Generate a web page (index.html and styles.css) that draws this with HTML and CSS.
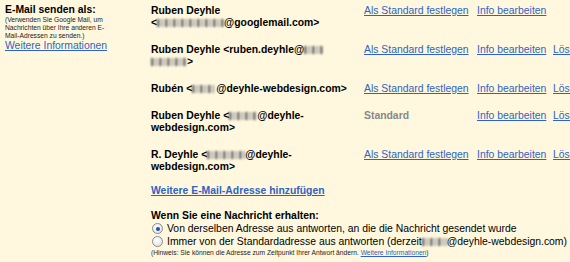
FILE: index.html
```html
<!DOCTYPE html>
<html lang="de">
<head>
  <meta charset="UTF-8" />
  <title>Einstellungen | Konten</title>
  <link rel="stylesheet" href="styles.css">
</head>
<body>
  <div class="side">
    <div class="side-title">E-Mail senden als:</div>
    <div class="small">(Verwenden Sie Google Mail, um<br>Nachrichten über Ihre anderen E-<br>Mail-Adressen zu senden.)</div>
    <a href="#">Weitere Informationen</a>
  </div>

  <div class="main">
    <div class="row">
      <div class="name">Ruben Deyhle<br>&lt;<span class="blur" style="width:67px"></span>@googlemail.com&gt;</div>
      <a href="#">Als Standard festlegen</a>
      <a href="#">Info bearbeiten</a>
      <span></span>
    </div>
    <div class="row">
      <div class="name">Ruben Deyhle &lt;ruben.deyhle@<span class="blur" style="width:19px"></span><br><span class="blur" style="width:36px"></span>&gt;</div>
      <a href="#">Als Standard festlegen</a>
      <a href="#">Info bearbeiten</a>
      <a href="#">Löschen</a>
    </div>
    <div class="row">
      <div class="name">Rubén &lt;<span class="blur" style="width:24px"></span>@deyhle-webdesign.com&gt;</div>
      <a href="#">Als Standard festlegen</a>
      <a href="#">Info bearbeiten</a>
      <a href="#">Löschen</a>
    </div>
    <div class="row">
      <div class="name">Ruben Deyhle &lt;<span class="blur" style="width:28px"></span>@deyhle-<br>webdesign.com&gt;</div>
      <span class="default">Standard</span>
      <a href="#">Info bearbeiten</a>
      <a href="#">Löschen</a>
    </div>
    <div class="row">
      <div class="name">R. Deyhle &lt;<span class="blur" style="width:38px"></span>@deyhle-<br>webdesign.com&gt;</div>
      <a href="#">Als Standard festlegen</a>
      <a href="#">Info bearbeiten</a>
      <a href="#">Löschen</a>
    </div>

    <a class="add" href="#">Weitere E-Mail-Adresse hinzufügen</a>

    <div class="reply-title">Wenn Sie eine Nachricht erhalten:</div>
    <div class="option"><span class="radio checked"></span>Von derselben Adresse aus antworten, an die die Nachricht gesendet wurde</div>
    <div class="option"><span class="radio"></span>Immer von der Standardadresse aus antworten (derzeit <span class="blur" style="width:25px"></span>@deyhle-webdesign.com)</div>
    <div class="small">(Hinweis: Sie können die Adresse zum Zeitpunkt Ihrer Antwort ändern. <a href="#">Weitere Informationen</a>)</div>
  </div>
</body>
</html>
```

FILE: styles.css
```css
html, body {
  overflow: hidden;
}

body {
  margin: 0;
  width: 570px;
  height: 262px;
  display: flex;
  background: #fff8df;
  color: #000;
  font-family: "Liberation Sans", Arial, sans-serif;
  font-size: 10.4px;
  line-height: 12px;
}

a {
  color: #2f62c4;
  text-decoration: underline;
}

.side {
  flex: 0 0 146px;
  padding: 4px 0 0 5px;
}

.side-title {
  font-weight: bold;
}

.small {
  font-size: 6.7px;
  line-height: 8px;
  color: #222;
}

.main {
  flex: 0 0 auto;
  white-space: nowrap;
}

.row {
  display: grid;
  grid-template-columns: 213px 113px 76px 60px;
  padding: 5px 0 10px;
}

.name {
  font-weight: bold;
}

.default {
  font-weight: bold;
  color: #888;
}

/* unkenntlich gemachte Teile der Adressen */
.blur {
  display: inline-block;
  height: 8px;
  vertical-align: -1px;
  background: repeating-linear-gradient(90deg, #333 0 2px, #999 2px 3px, #ddd 3px 5px, #555 5px 6px, transparent 6px 8px);
  filter: blur(1px);
  opacity: 0.75;
}

.add {
  display: inline-block;
  margin-top: 2px;
  font-weight: bold;
}

.reply-title {
  margin-top: 13px;
  font-weight: bold;
}

.option {
  display: flex;
  align-items: center;
  height: 13px;
}

.radio {
  width: 9px;
  height: 9px;
  margin: 0 4px 0 1px;
  border: 1px solid #8a8a8a;
  border-radius: 50%;
  background: radial-gradient(circle at 40% 35%, #fff, #ddd);
  flex: 0 0 auto;
  position: relative;
}

.radio.checked::after {
  content: "";
  position: absolute;
  left: 2.5px;
  top: 2.5px;
  width: 4px;
  height: 4px;
  border-radius: 50%;
  background: #1f4fa8;
}

.main .small {
  margin-top: 1px;
}
```
